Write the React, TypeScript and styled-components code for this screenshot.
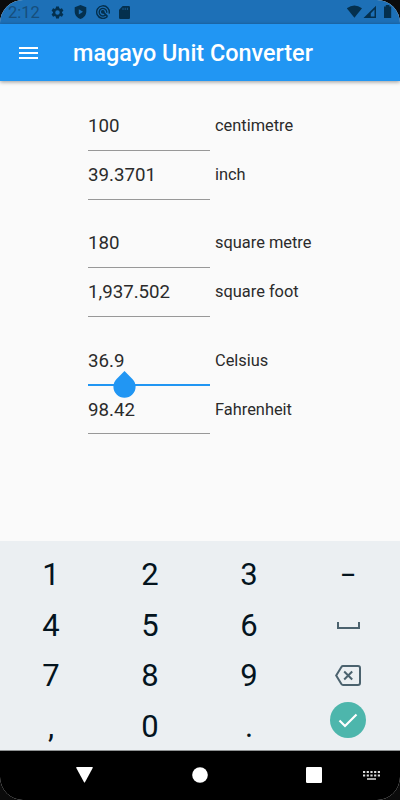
import React from "react";
import styled, { createGlobalStyle } from "styled-components";

const Global = createGlobalStyle`
  * { box-sizing: border-box; }
  body { margin: 0; background: #0b0b0b; font-family: Roboto, "Liberation Sans", sans-serif; }
`;

const Screen = styled.main`
  width: 400px;
  height: 800px;
  display: flex;
  flex-direction: column;
  overflow: hidden;
  border-radius: 23px;
  background: #fafafa;
`;

const StatusBar = styled.header`
  height: 24px;
  flex: none;
  display: flex;
  align-items: center;
  justify-content: space-between;
  padding: 0 8px 0 8px;
  background: #1d70b7;
  color: #04304e;
`;

const Clock = styled.span`
  width: 34.5px;
  font-size: 16.5px;
  line-height: 24px;
  color: #164e7c;
  padding-top: 1px;
`;

const StatusIcons = styled.div<{ $gap: number }>`
  display: flex;
  align-items: center;
  gap: ${(p) => p.$gap}px;
  svg { display: block; }
`;

const AppBar = styled.div`
  height: 57px;
  flex: none;
  display: flex;
  align-items: center;
  padding-left: 19px;
  gap: 35px;
  background: #2196f3;
  box-shadow: 0 1px 4px rgba(0, 0, 0, 0.4);
  z-index: 1;
`;

const MenuButton = styled.button`
  border: 0;
  padding: 0;
  background: none;
  width: 19px;
  height: 14px;
  display: flex;
  svg { display: block; }
`;

const Title = styled.h1`
  margin: 0;
  font-size: 23.4px;
  line-height: 28px;
  font-weight: 500;
  color: #fff;
  white-space: nowrap;
`;

const Form = styled.section`
  flex: 1;
  display: flex;
  flex-direction: column;
  gap: 19.4px;
  padding: 21px 0 0 88px;
`;

const Pair = styled.div`
  display: flex;
  flex-direction: column;
`;

const FieldRow = styled.div`
  height: 48.9px;
  display: flex;
  gap: 5px;
`;

const Field = styled.div<{ $active?: boolean }>`
  position: relative;
  width: 122px;
  height: ${(p) => (p.$active ? 49.5 : 48.9)}px;
  padding-top: 12.3px;
  border-bottom: ${(p) => (p.$active ? "2px solid #2196f3" : "1px solid #989898")};
  font-size: 18.7px;
  line-height: 24px;
  color: #2b2b2b;
`;

const Unit = styled.span`
  padding-top: 12.3px;
  font-size: 16.4px;
  line-height: 24px;
  color: #2b2b2b;
`;

const Handle = styled.svg`
  position: absolute;
  left: 24.7px;
  top: 35px;
  z-index: 2;
`;

const Keypad = styled.section`
  height: 210px;
  flex: none;
  display: grid;
  grid-template-columns: repeat(4, 99px);
  grid-template-rows: repeat(4, 50.8px);
  padding: 8px 0 0 1.5px;
  background: #ebeff2;
  border-bottom: 1px solid #8f9293;
`;

const Key = styled.button<{ $icon?: boolean; $raised?: boolean; $dash?: boolean }>`
  border: 0;
  padding: ${(p) => (p.$icon ? "0" : "1px 0 0 0")};
  margin-top: ${(p) => (p.$raised ? "-14px" : "0")};
  background: none;
  display: flex;
  align-items: center;
  justify-content: center;
  font: ${(p) => (p.$dash ? "500 24px/32px" : "400 31px/36px")} Roboto, "Liberation Sans", sans-serif;
  color: #04141e;
  svg { display: block; }
`;

const NavBar = styled.nav`
  height: 49px;
  flex: none;
  display: flex;
  align-items: center;
  padding: 0 0 1px 76px;
  gap: 41px;
  background: #000;
  svg { display: block; }
`;

const NavButtons = styled.div`
  display: flex;
  align-items: center;
  gap: 98.7px;
`;

const groups = [
  [["100", "centimetre"], ["39.3701", "inch"]],
  [["180", "square metre"], ["1,937.502", "square foot"]],
  [["36.9", "Celsius"], ["98.42", "Fahrenheit"]],
];

const Gear = () => (
  <svg width="15" height="15" viewBox="0 0 24 24" fill="currentColor">
    <path d="M19.14 12.94c.04-.3.06-.61.06-.94 0-.32-.02-.64-.07-.94l2.03-1.58c.18-.14.23-.41.12-.61l-1.92-3.32c-.12-.22-.37-.29-.59-.22l-2.39.96c-.5-.38-1.03-.7-1.62-.94l-.36-2.54c-.04-.24-.24-.41-.48-.41h-3.84c-.24 0-.43.17-.47.41l-.36 2.54c-.59.24-1.13.57-1.62.94l-2.39-.96c-.22-.08-.47 0-.59.22L2.74 8.87c-.12.21-.08.47.12.61l2.03 1.58c-.05.3-.09.63-.09.94s.02.64.07.94l-2.03 1.58c-.18.14-.23.41-.12.61l1.92 3.32c.12.22.37.29.59.22l2.39-.96c.5.38 1.03.7 1.62.94l.36 2.54c.05.24.24.41.48.41h3.84c.24 0 .44-.17.47-.41l.36-2.54c.59-.24 1.13-.56 1.62-.94l2.39.96c.22.08.47 0 .59-.22l1.92-3.32c.12-.22.07-.47-.12-.61l-2.01-1.58zM12 15.6A3.6 3.6 0 1 1 12 8.4a3.6 3.6 0 0 1 0 7.2z" />
  </svg>
);

const Shield = () => (
  <svg width="13" height="14" viewBox="0 0 13 14" fill="currentColor">
    <path fillRule="evenodd" d="M6.5 0 12.3 2.2V6.5C12.3 10 9.8 13 6.5 14 3.2 13 .7 10 .7 6.5V2.2ZM4.8 4.2V9.4L9 6.8Z" />
  </svg>
);

const Radar = () => (
  <svg width="14" height="14" viewBox="0 0 14 14" fill="none" stroke="currentColor" strokeWidth="1.4">
    <path d="M11.2 11.8A6.3 6.3 0 1 1 13.1 8.6" />
    <path d="M9.9 9.6A3.8 3.8 0 1 1 10.7 6.4V7.8" />
    <path d="M6.7 6.7 11.6 11.6" strokeWidth="1.7" />
    <circle cx="6.8" cy="6.8" r="1.2" fill="currentColor" />
  </svg>
);

const SdCard = () => (
  <svg width="11" height="13" viewBox="0 0 11 13">
    <path d="M3.7 0H9.8Q11 0 11 1.2V11.8Q11 13 9.8 13H1.2Q0 13 0 11.8V3.8Z" fill="currentColor" />
    <path d="M4 1.8V4M6.2 1.8V4M8.4 1.8V4" stroke="#185e98" strokeWidth=".9" />
  </svg>
);

export default function App() {
  return (
    <Screen>
      <Global />
      <StatusBar>
        <StatusIcons $gap={7.5}>
          <Clock>2:12</Clock>
          <StatusIcons $gap={9}>
            <Gear />
            <Shield />
            <Radar />
            <SdCard />
          </StatusIcons>
        </StatusIcons>
        <StatusIcons $gap={0}>
          <svg width="46" height="14" viewBox="0 0 46 14" fill="currentColor">
            <path d="M.8 3.2Q8.4-2.2 16 3.2L8.4 12.8Z" />
            <path fillRule="evenodd" d="M17.5 13 30 .7V13ZM24.8 11.6H28.5V4.5L24.8 8.2Z" />
            <path d="M38 1.6H39.8V0H43.4V1.6H45.2V13H38Z" />
          </svg>
        </StatusIcons>
      </StatusBar>
      <AppBar>
        <MenuButton aria-label="Menu">
          <svg width="19" height="14" viewBox="0 0 19 14" stroke="#fff" strokeWidth="2">
            <path d="M0 2H19M0 7H19M0 12H19" />
          </svg>
        </MenuButton>
        <Title>magayo Unit Converter</Title>
      </AppBar>
      <Form>
        {groups.map((pair) => (
          <Pair key={pair[0][1]}>
            {pair.map(([value, unit]) => (
              <FieldRow key={unit}>
                <Field $active={unit === "Celsius"}>
                  {value}
                  {unit === "Celsius" && (
                    <Handle width="23" height="28" viewBox="0 0 23 28" fill="#2196f3">
                      <path d="M11.5 0 19.4 7.9A11.1 11.1 0 1 1 3.6 7.9Z" />
                    </Handle>
                  )}
                </Field>
                <Unit>{unit}</Unit>
              </FieldRow>
            ))}
          </Pair>
        ))}
      </Form>
      <Keypad>
        <Key>1</Key>
        <Key>2</Key>
        <Key>3</Key>
        <Key $dash>–</Key>
        <Key>4</Key>
        <Key>5</Key>
        <Key>6</Key>
        <Key $icon aria-label="Space">
          <svg width="23" height="7" viewBox="0 0 23 7" fill="none" stroke="#4b626e" strokeWidth="2">
            <path d="M1 0V6H22V0" />
          </svg>
        </Key>
        <Key>7</Key>
        <Key>8</Key>
        <Key>9</Key>
        <Key $icon aria-label="Delete">
          <svg width="26" height="21" viewBox="0 0 26 21" fill="none" stroke="#4b626e" strokeWidth="2">
            <path d="M8 1H23Q25 1 25 3V18Q25 20 23 20H8Q7 20 6.4 19L1.2 10.5 6.4 2Q7 1 8 1Z" />
            <path d="M9.2 6.5 17.2 14.5M17.2 6.5 9.2 14.5" />
          </svg>
        </Key>
        <Key>,</Key>
        <Key>0</Key>
        <Key>.</Key>
        <Key $icon $raised aria-label="Done">
          <svg width="36" height="36" viewBox="0 0 36 36" fill="none">
            <circle cx="18" cy="18" r="18" fill="#4db6ac" />
            <path d="M9.5 18.5 15 24 26.5 12.5" stroke="#fff" strokeWidth="2.2" />
          </svg>
        </Key>
      </Keypad>
      <NavBar>
        <NavButtons>
          <svg width="17" height="16" viewBox="0 0 17 16" fill="#fff">
            <path d="M.8 0H16.2Q17.2 0 16.7 1L9.1 15Q8.5 16 7.9 15L.3 1Q-.2 0 .8 0Z" />
          </svg>
          <svg width="16" height="16" viewBox="0 0 16 16"><circle cx="8" cy="8" r="7.8" fill="#fff" /></svg>
          <svg width="16" height="16" viewBox="0 0 16 16"><rect width="16" height="16" rx="1.2" fill="#fff" /></svg>
        </NavButtons>
        <svg width="17" height="9" viewBox="0 0 17 9" fill="none" stroke="#ddd">
          <path d="M0 1H17M0 4.5H17" strokeWidth="2" strokeDasharray="2.2 1.5" />
          <path d="M4 8H13" strokeWidth="1.7" />
        </svg>
      </NavBar>
    </Screen>
  );
}
